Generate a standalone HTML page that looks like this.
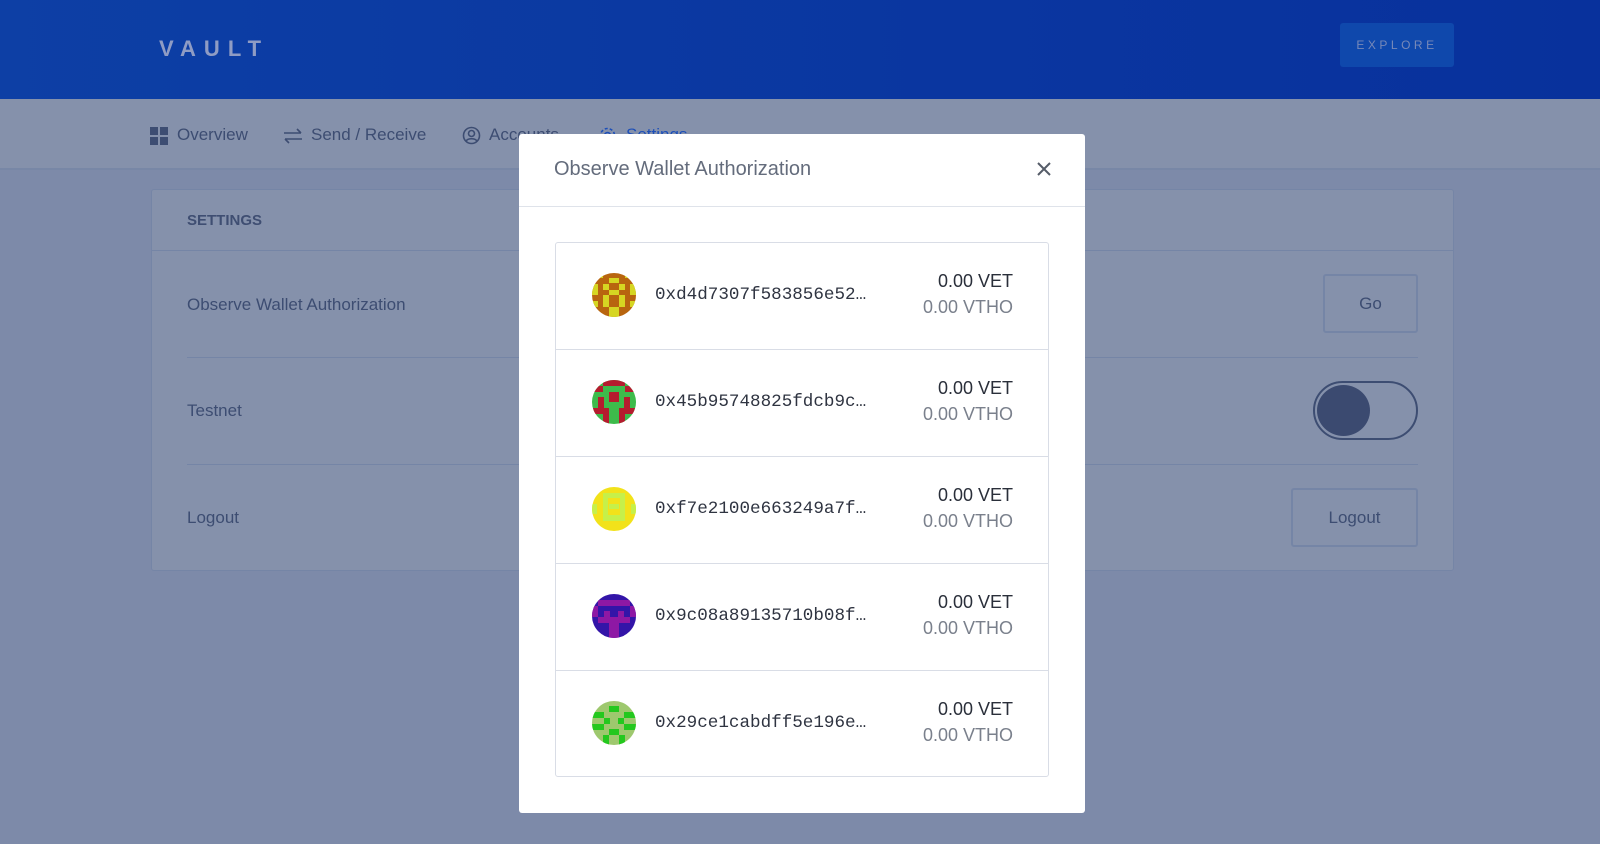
<!DOCTYPE html>
<html><head><meta charset="utf-8"><style>
*{box-sizing:border-box;margin:0;padding:0}
body{width:1600px;height:844px;overflow:hidden;background:#7d8aa9;font-family:"Liberation Sans",sans-serif;position:relative}
.hdr{position:absolute;left:0;top:0;width:1600px;height:99px;background:linear-gradient(90deg,#0d3fa5,#0a36a0 60%,#08319c)}
.logo{position:absolute;left:159px;top:36px;color:#8f9cc4;font-size:22px;letter-spacing:8px;font-weight:bold}
.explore{position:absolute;left:1340px;top:23px;width:114px;height:44px;background:#0f48ac;border-radius:3px;color:#7789b8;font-size:12px;letter-spacing:3.5px;text-align:center;line-height:44px}
.nav{position:absolute;left:0;top:99px;width:1600px;height:71px;background:#8591ab;border-bottom:2px solid #7887a6}
.nav span{position:absolute;top:26px;font-size:17px;color:#3d4d72}
.card{position:absolute;left:151px;top:189px;width:1303px;height:382px;background:#8591ab;border:1px solid #7585a6;border-radius:3px}
.card .h{height:61px;border-bottom:1px solid #7585a6;padding:22px 0 0 35px;font-size:15px;font-weight:bold;color:#3f4e72}
.lbl{position:absolute;left:35px;font-size:17px;color:#3d4d72}
.sep{position:absolute;left:35px;width:1231px;height:1px;background:#7585a6}
.btn{position:absolute;border:2px solid #7585a6;border-radius:3px;color:#3d4d72;font-size:17px;text-align:center}
.modal{position:absolute;left:519px;top:134px;width:566px;height:679px;background:#fff;border-radius:3px}
.mt{position:absolute;left:35px;top:24px;font-size:20px;color:#646c7c}
.mline{position:absolute;left:0;top:72px;width:566px;height:1px;background:#dfe3ea}
.list{position:absolute;left:36px;top:108px;width:494px;height:535px;border:1px solid #d9dde6;border-radius:3px}
.row{position:relative;height:107px;border-bottom:1px solid #d9dde6}
.row:last-child{border-bottom:none}
.row svg{position:absolute;left:36px;top:30px}
.addr{position:absolute;left:99px;top:42px;font-family:"Liberation Mono",monospace;font-size:17.6px;color:#2f3441}
.v1{position:absolute;right:35px;top:28px;font-size:18px;color:#2a2f3a}
.v2{position:absolute;right:35px;top:54px;font-size:18px;color:#7a808c}
</style></head><body>
<div class="hdr"><div class="logo">VAULT</div><div class="explore">EXPLORE</div></div>
<div class="nav">
<svg style="position:absolute;left:150px;top:28px" width="18" height="18"><rect x="0" y="0" width="8" height="8" fill="#3d4d72"/><rect x="10" y="0" width="8" height="8" fill="#3d4d72"/><rect x="0" y="10" width="8" height="8" fill="#3d4d72"/><rect x="10" y="10" width="8" height="8" fill="#3d4d72"/></svg>
<span style="left:177px">Overview</span>
<svg style="position:absolute;left:283px;top:28px" width="20" height="18" fill="none" stroke="#3d4d72" stroke-width="1.6"><path d="M1 6h17M14 2l4 4M19 12H2M6 16l-4-4"/></svg>
<span style="left:311px">Send / Receive</span>
<svg style="position:absolute;left:462px;top:27px" width="19" height="19" fill="none" stroke="#3d4d72" stroke-width="1.6"><circle cx="9.5" cy="9.5" r="8"/><circle cx="9.5" cy="7.5" r="3"/><path d="M4 15c2-3 9-3 11 0"/></svg>
<span style="left:489px">Accounts</span>
<svg style="position:absolute;left:598px;top:27px" width="19" height="19" fill="none" stroke="#1d4fb8" stroke-width="1.6"><circle cx="9.5" cy="9.5" r="3"/><circle cx="9.5" cy="9.5" r="7" stroke-dasharray="3 2"/></svg>
<span style="left:626px;color:#1d4fb8">Settings</span>
</div>
<div class="card">
<div class="h">SETTINGS</div>
<div class="lbl" style="top:105px">Observe Wallet Authorization</div>
<div class="btn" style="left:1171px;top:84px;width:95px;height:59px;line-height:55px">Go</div>
<div class="sep" style="top:167px"></div>
<div class="lbl" style="top:211px">Testnet</div>
<div style="position:absolute;left:1161px;top:191px;width:105px;height:59px;border:2px solid #3d4d72;border-radius:30px"><div style="position:absolute;left:2px;top:2px;width:53px;height:51px;border-radius:50%;background:#3b4a70"></div></div>
<div class="sep" style="top:274px"></div>
<div class="lbl" style="top:318px">Logout</div>
<div class="btn" style="left:1139px;top:298px;width:127px;height:59px;line-height:55px">Logout</div>
</div>
<div class="modal">
<div class="mt">Observe Wallet Authorization</div>
<svg style="position:absolute;left:517px;top:27px" width="16" height="16" stroke="#555c68" stroke-width="2"><path d="M2 2l12 12M14 2L2 14"/></svg>
<div class="mline"></div>
<div class="list">
<div class="row"><svg width="44" height="44"><defs><clipPath id="c"><circle cx="22" cy="22" r="22"/></clipPath></defs><g clip-path="url(#c)"><rect width="44" height="44" fill="#b8650f"/><path fill="#d6d622" d="M5 0h6v5H5zM17 5h10v5H17zM0 11h6v11H0zM38 11h6v11H38zM11 11h6v6H11zM27 11h6v6H27zM17 17h10v5H17zM11 22h6v12H11zM27 22h6v12H27zM0 28h6v6H0zM38 28h6v6H38zM17 34h10v10H17zM33 0h6v5H33z"/></g></svg><div class="addr">0xd4d7307f583856e52…</div><div class="v1">0.00 VET</div><div class="v2">0.00 VTHO</div></div>
<div class="row"><svg width="44" height="44"><g clip-path="url(#c)"><rect width="44" height="44" fill="#3dbb4b"/><path fill="#b51c2e" d="M11 0h22v6H11zM0 6h11v6H0zM33 6h11v6H33zM17 12h10v10H17zM6 17h6v11H6zM32 17h6v11H32zM0 28h17v6H0zM27 28h17v6H27zM11 34h6v10H11zM27 34h6v10H27z"/></g></svg><div class="addr">0x45b95748825fdcb9c…</div><div class="v1">0.00 VET</div><div class="v2">0.00 VTHO</div></div>
<div class="row"><svg width="44" height="44"><g clip-path="url(#c)"><rect width="44" height="44" fill="#f2e21a"/><path fill="#c6f04a" d="M11 6h22v5H11zM11 11h5v17H11zM28 11h5v17H28zM17 17h10v5H17zM11 28h22v6H11zM0 17h5v10H0zM39 17h5v10H39z"/></g></svg><div class="addr">0xf7e2100e663249a7f…</div><div class="v1">0.00 VET</div><div class="v2">0.00 VTHO</div></div>
<div class="row"><svg width="44" height="44"><g clip-path="url(#c)"><rect width="44" height="44" fill="#3315a8"/><path fill="#8e18a4" d="M6 6h32v6H6zM0 12h6v11H0zM38 12h6v11H38zM12 17h6v6H12zM26 17h6v6H26zM6 23h32v6H6zM17 29h10v15H17z"/></g></svg><div class="addr">0x9c08a89135710b08f…</div><div class="v1">0.00 VET</div><div class="v2">0.00 VTHO</div></div>
<div class="row"><svg width="44" height="44"><g clip-path="url(#c)"><rect width="44" height="44" fill="#9ec86e"/><path fill="#24c81e" d="M0 11h12v6H0zM32 11h12v6H32zM12 17h6v6H12zM26 17h6v6H26zM0 23h12v6H0zM32 23h12v6H32zM17 28h10v6H17zM11 34h6v10H11zM27 34h6v10H27zM17 5h10v6H17z"/></g></svg><div class="addr">0x29ce1cabdff5e196e…</div><div class="v1">0.00 VET</div><div class="v2">0.00 VTHO</div></div>
</div>
</div>
</body></html>
